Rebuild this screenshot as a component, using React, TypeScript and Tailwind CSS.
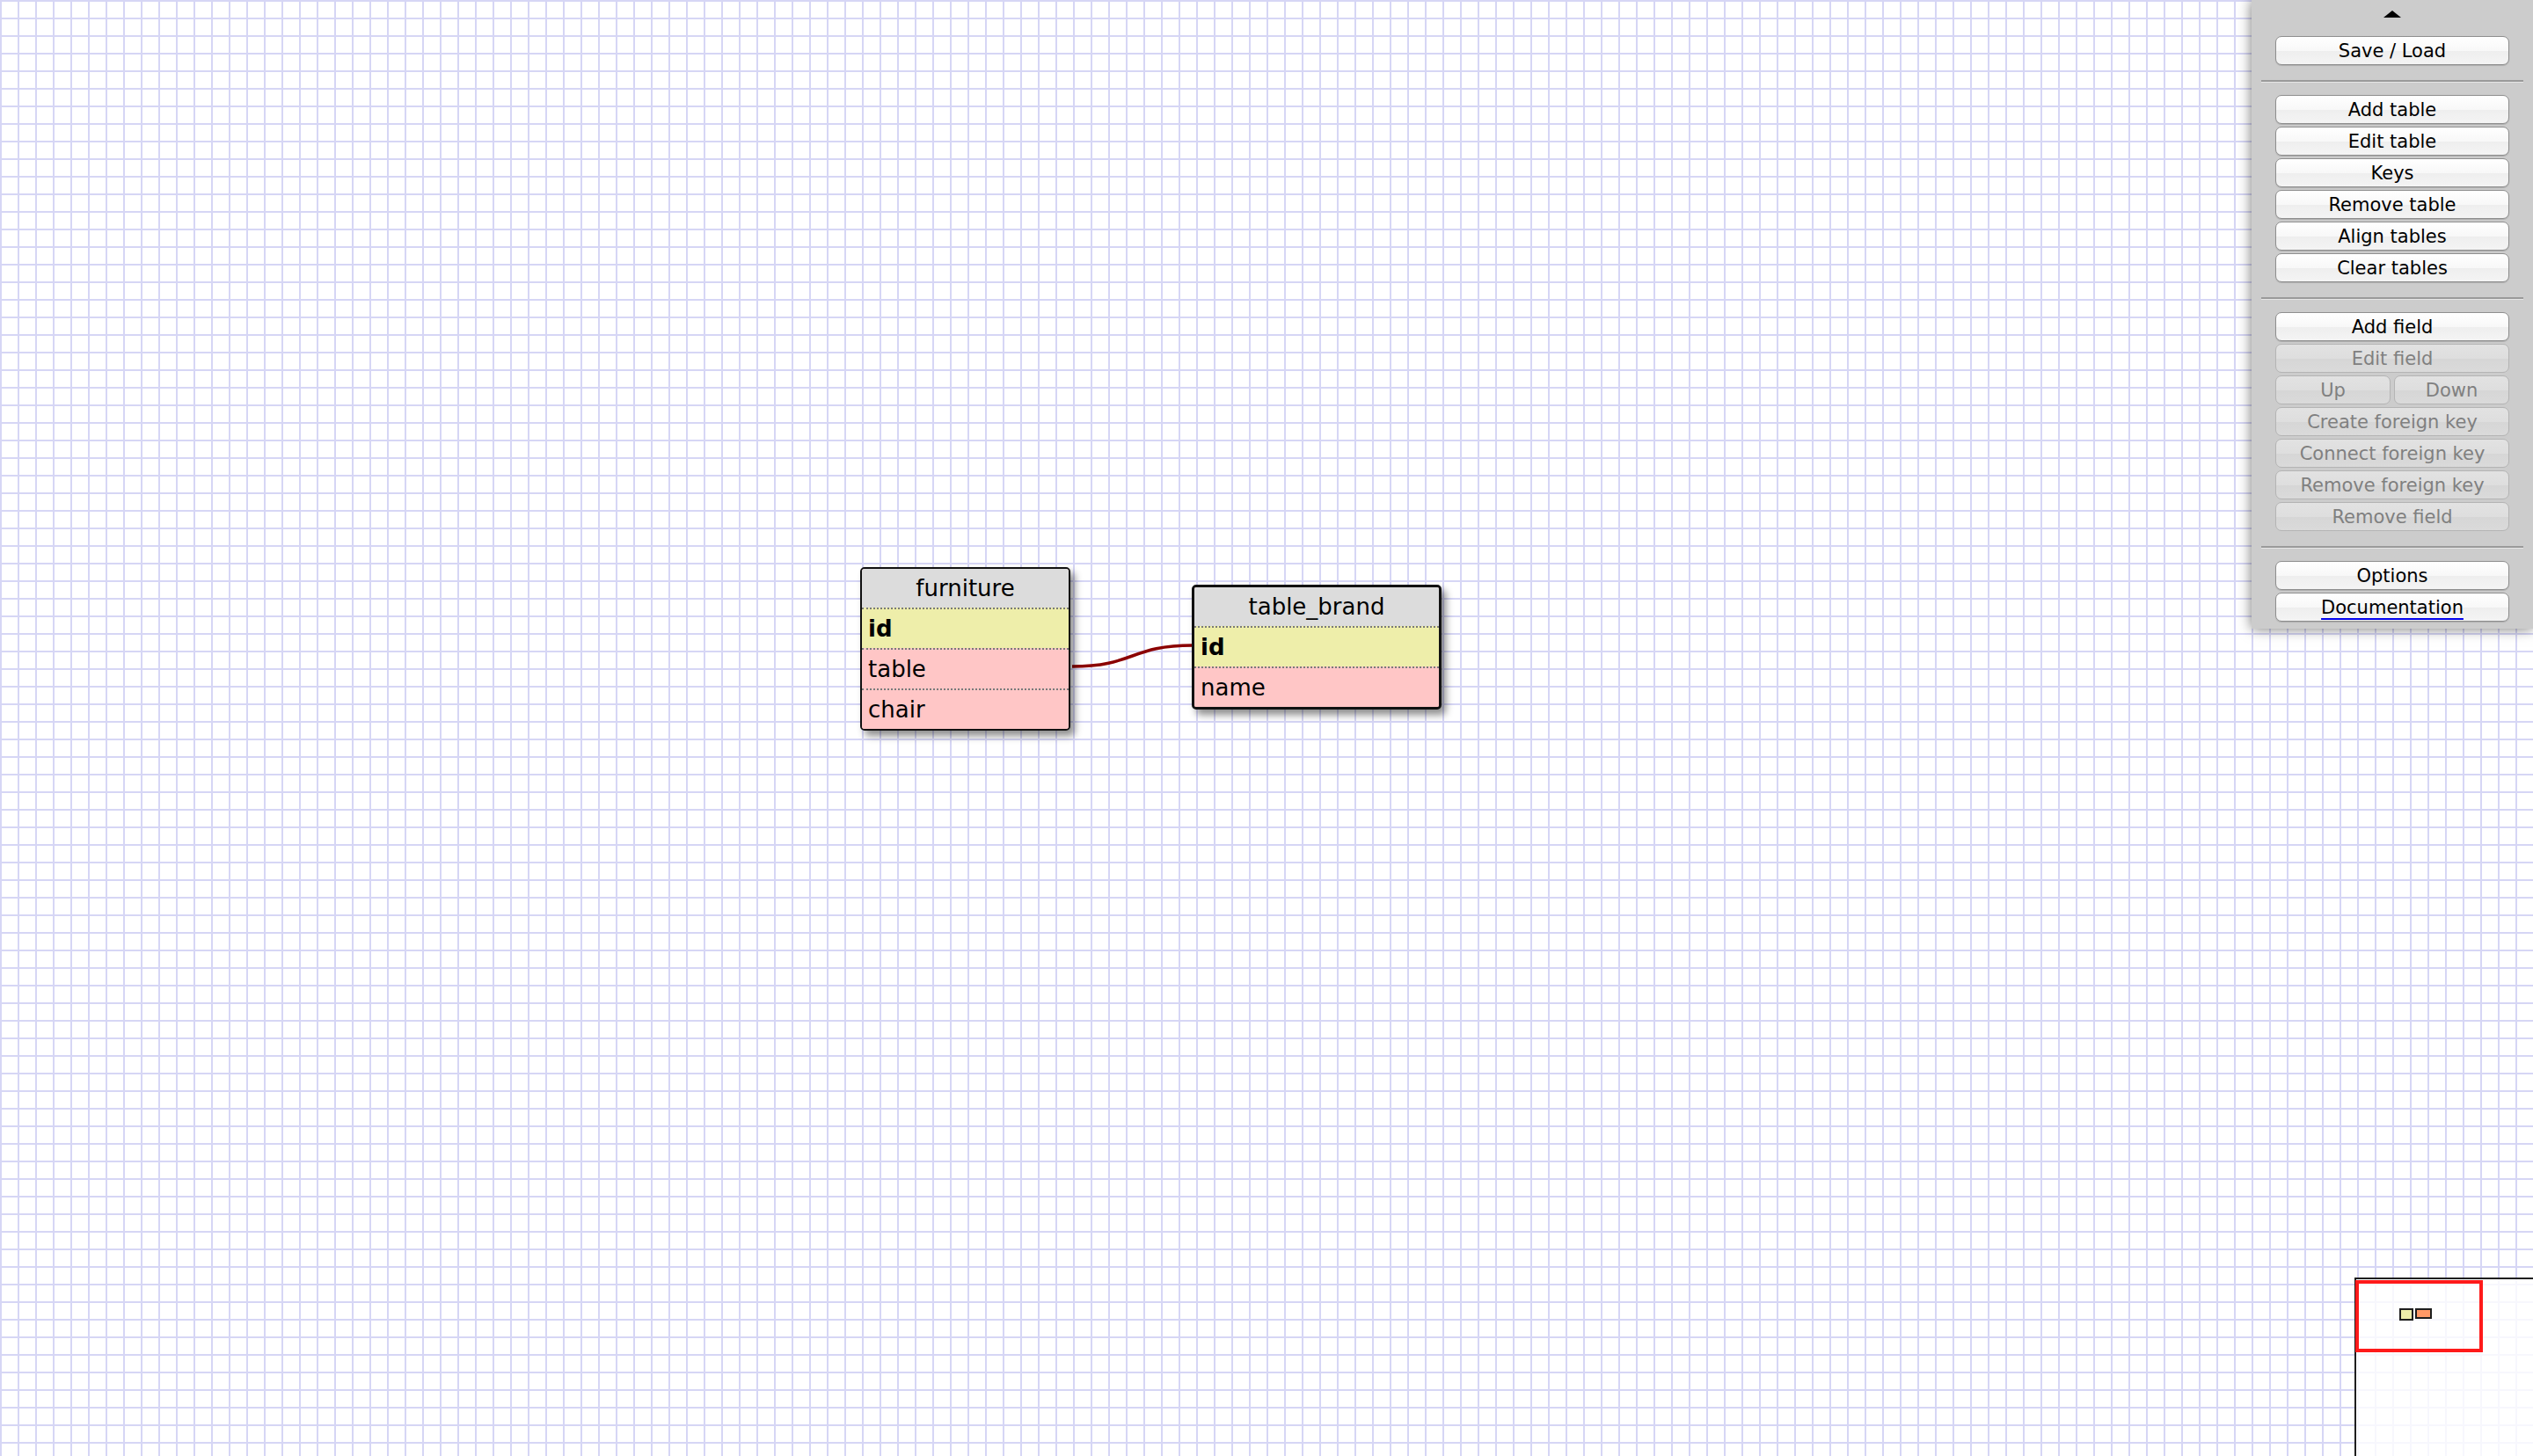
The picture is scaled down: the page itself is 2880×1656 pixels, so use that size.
import React from "react";

type Field = { name: string; pk?: boolean };

const font = "font-['DejaVu_Sans',Verdana,sans-serif]";

function DbTable({
    title,
    fields,
    className,
    thick,
}: {
    title: string;
    fields: Field[];
    className: string;
    thick?: boolean;
}) {
    return (
        <div
            className={`absolute ${className} ${thick ? "border-[3px]" : "border-2"} border-[#111] rounded-[5px] overflow-hidden shadow-[5px_6px_9px_rgba(0,0,0,0.45)] ${font} text-[26px] text-black bg-[#ffc6c6]`}
        >
            <div className="h-[44px] bg-[#dcdcdc] flex items-center justify-center leading-none">{title}</div>
            {fields.map((f) => (
                <div
                    key={f.name}
                    className={`h-[46px] border-t-2 border-dotted border-[#7a7a7a] flex items-center px-[7px] leading-none ${
                        f.pk ? "bg-[#eeeeaa] font-bold" : "bg-[#ffc6c6]"
                    }`}
                >
                    {f.name}
                </div>
            ))}
        </div>
    );
}

function ToolButton({
    label,
    disabled,
    link,
    className,
}: {
    label: string;
    disabled?: boolean;
    link?: boolean;
    className?: string;
}) {
    return (
        <button
            className={`h-[33px] pt-[2px] rounded-[7px] border flex items-center justify-center text-[21px] leading-none ${font} ${
                disabled
                    ? "border-[#b4b4b4] text-[#808080] bg-[linear-gradient(to_bottom,#e2e2e2_0%,#dedede_50%,#d6d6d6_51%,#dadada_100%)]"
                    : "border-[#8e8e8e] text-black bg-[linear-gradient(to_bottom,#ffffff_0%,#f8f8f8_50%,#eeeeee_51%,#f4f4f4_100%)] shadow-[0_1px_1px_rgba(0,0,0,0.15)]"
            } ${className ?? "w-full"}`}
        >
            <span className={link ? "underline decoration-[#0000ee] decoration-2 underline-offset-[5px]" : ""}>{label}</span>
        </button>
    );
}

function Divider() {
    return <div className="h-[3px] border-t-2 border-[#9a9a9a] border-b border-b-[#e6e6e6] -mx-[16px] mt-[17px] mb-[14px]" />;
}

export default function App() {
    return (
        <div className="relative w-[2880px] h-[1656px] overflow-hidden bg-white bg-[linear-gradient(to_right,#d6d6f5_2px,transparent_2px),linear-gradient(to_bottom,#d6d6f5_2px,transparent_2px)] bg-size-[20px_20px]">
            {/* relation */}
            <svg className="absolute inset-0 pointer-events-none" width="2880" height="1656">
                <path d="M1219 758 C1290 758 1285 734 1356 734" stroke="#8b0000" strokeWidth="3.5" fill="none" />
            </svg>

            <DbTable
                title="furniture"
                className="left-[978px] top-[645px] w-[239px]"
                fields={[{ name: "id", pk: true }, { name: "table" }, { name: "chair" }]}
            />
            <DbTable
                title="table_brand"
                thick
                className="left-[1355px] top-[665px] w-[284px]"
                fields={[{ name: "id", pk: true }, { name: "name" }]}
            />

            {/* toolbar */}
            <div className="absolute top-0 right-0 w-[320px] h-[715px] bg-[#cccccc] shadow-[0_0_14px_rgba(0,0,0,0.55)] px-[27px] pt-[12px] flex flex-col">
                <div className="flex justify-center">
                    <div className="w-0 h-0 border-l-[10px] border-r-[10px] border-b-[8px] border-l-transparent border-r-transparent border-b-black" />
                </div>
                <div className="mt-[21px] flex flex-col">
                    <ToolButton label="Save / Load" />
                </div>
                <Divider />
                <div className="flex flex-col gap-[3px]">
                    <ToolButton label="Add table" />
                    <ToolButton label="Edit table" />
                    <ToolButton label="Keys" />
                    <ToolButton label="Remove table" />
                    <ToolButton label="Align tables" />
                    <ToolButton label="Clear tables" />
                </div>
                <Divider />
                <div className="flex flex-col gap-[3px]">
                    <ToolButton label="Add field" />
                    <ToolButton label="Edit field" disabled />
                    <div className="flex gap-[4px]">
                        <ToolButton label="Up" disabled className="w-[131px]" />
                        <ToolButton label="Down" disabled className="flex-1" />
                    </div>
                    <ToolButton label="Create foreign key" disabled />
                    <ToolButton label="Connect foreign key" disabled />
                    <ToolButton label="Remove foreign key" disabled />
                    <ToolButton label="Remove field" disabled />
                </div>
                <Divider />
                <div className="flex flex-col gap-[3px]">
                    <ToolButton label="Options" />
                    <ToolButton label="Documentation" link />
                </div>
            </div>

            {/* minimap */}
            <div className="absolute left-[2677px] top-[1453px] w-[210px] h-[210px] border-2 border-[#1e1e1e] bg-white/80">
                <div className="absolute left-[-1px] top-[1px] w-[145px] h-[82px] border-4 border-[#ff1a1a]" />
                <div className="absolute left-[49px] top-[33px] w-[16px] h-[14px] border-2 border-[#1e1e1e] bg-[#eeeeaa]" />
                <div className="absolute left-[67px] top-[33px] w-[19px] h-[12px] border-2 border-[#1e1e1e] bg-[#ff9966]" />
            </div>
        </div>
    );
}
